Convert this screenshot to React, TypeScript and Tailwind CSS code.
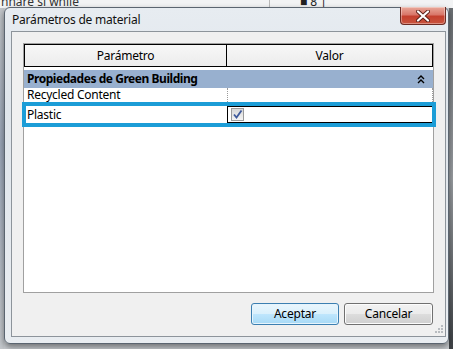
import React from "react";

const font = "font-['Segoe_UI','Noto_Sans','Open_Sans',sans-serif]";

function CloseButton() {
  return (
    <div className="absolute right-[2px] top-[-1px] flex h-[18px] w-[46px] items-center justify-center rounded-b-[4px] border border-t-0 border-[#6b2a22] bg-[linear-gradient(to_bottom,#e9a99a_0%,#d9776a_45%,#c4402e_55%,#c9553f_100%)] shadow-[inset_0_0_0_1px_rgba(255,255,255,0.35)]">
      <svg width="14" height="12" viewBox="0 0 14 12">
        <path d="M2 1.5 L12 10.5 M12 1.5 L2 10.5" stroke="#5a2018" strokeWidth="4" strokeLinecap="round" />
        <path d="M2 1.5 L12 10.5 M12 1.5 L2 10.5" stroke="#ffffff" strokeWidth="2.2" strokeLinecap="round" />
      </svg>
    </div>
  );
}

function CollapseIcon() {
  return (
    <svg width="8" height="9" viewBox="0 0 8 9">
      <path d="M1 4 L4 1 L7 4 M1 8 L4 5 L7 8" stroke="#000" strokeWidth="1.4" fill="none" />
    </svg>
  );
}

function Checkbox() {
  return (
    <div className="flex h-[13px] w-[13px] items-center justify-center border border-[#9a9a9a] bg-[linear-gradient(to_bottom,#d8d8d8,#f4f4f4)]">
      <svg width="11" height="11" viewBox="0 0 11 11">
        <path d="M2 5.5 L4.5 8.5 L9.5 1.5" stroke="#3f5a9c" strokeWidth="1.8" fill="none" />
      </svg>
    </div>
  );
}

function Grip() {
  const dots = [
    [6, 0],
    [3, 3],
    [6, 3],
    [0, 6],
    [3, 6],
    [6, 6],
  ];
  return (
    <svg width="8" height="8" viewBox="0 0 8 8">
      {dots.map(([x, y], i) => (
        <rect key={"g" + i} x={x} y={y} width="2" height="2" fill="#b8bcc0" />
      ))}
    </svg>
  );
}

export default function App() {
  return (
    <div className={`relative h-[349px] w-[453px] overflow-hidden bg-[#c9cdd1] text-black ${font}`}>
      {/* application behind the dialog */}
      <div className="flex h-[8px] items-end overflow-hidden bg-[#f2f3f4]">
        <span className="ml-[1px] text-[12px] leading-[12px] text-[#333]">nhare si while</span>
        <div className="ml-[190px] h-[8px] w-px bg-[#b8b8b8]" />
        <span className="ml-[30px] text-[12px] leading-[12px] text-[#222]">■ 8 |</span>
      </div>
      <div className="flex h-[341px] justify-between">
        <div className="w-[4px] bg-[linear-gradient(to_bottom,#c0c4c8,#9aa6b8_40%,#c4c8cc)]" />
        <div className="w-[4px] bg-[linear-gradient(to_bottom,#6a6e72,#9a9ea2_50%,#3e4246)]" />
      </div>

      {/* dialog window */}
      <div className="absolute left-[4px] top-[7px] h-[337px] w-[445px] rounded-[6px] border border-[#5b6570] bg-[linear-gradient(to_bottom,#e7ecf1,#dfe5eb_30%,#e9edf1)] shadow-[0_3px_6px_rgba(0,0,0,0.45)]">
        <CloseButton />
        <div className="flex h-[23px] items-center pl-[7px] text-[12px] tracking-[-0.2px] text-[#111]">
          Parámetros de material
        </div>
        <div className="ml-[6px] flex h-[306px] w-[435px] flex-col border border-[#8d949b] bg-[#f0f0f0] pl-[11px] pt-[11px]">
          {/* property grid */}
          <div className="flex h-[251px] w-[411px] flex-col border border-[#a0a0a0] bg-white text-[12px] tracking-[-0.25px]">
            <div className="flex h-[23px] border border-black bg-[linear-gradient(to_bottom,#f7f7f7,#ececec)]">
              <div className="flex w-[202px] items-center justify-center border-r border-black">Parámetro</div>
              <div className="flex flex-1 items-center justify-center">Valor</div>
            </div>
            <div className="h-[3px]" />
            <div className="flex h-[18px] items-center justify-between bg-[#98b0cf] pl-[3px] pr-[8px] font-bold">
              <span className="tracking-[-0.45px]">Propiedades de Green Building</span>
              <CollapseIcon />
            </div>
            <div className="flex h-[14px] items-center">
              <div className="w-[203px] pl-[3px] leading-[14px]">Recycled Content</div>
              <div className="h-full flex-1 border-x border-dotted border-[#9a9a9a]" />
            </div>
            <div className="relative flex h-[25px]">
              <div className="flex w-[203px] items-center pl-[3px]">Plastic</div>
              <div className="my-[4px] flex flex-1 items-center border border-black pl-[3px]">
                <Checkbox />
              </div>
              <div className="pointer-events-none absolute -left-[2px] top-0 h-[25px] w-[414px] border-[4px] border-[#1c9dd7]" />
            </div>
          </div>

          {/* buttons */}
          <div className="mt-[10px] flex items-start justify-end gap-[5px] pr-[12px] text-[12px] tracking-[-0.2px]">
            <button className="h-[22px] w-[88px] rounded-[3px] border border-[#3c7fb1] bg-[linear-gradient(to_bottom,#eaf6fd_0%,#d9f0fc_50%,#bee6fd_51%,#a7d9f5_100%)] shadow-[inset_0_0_0_1px_#e6f4fc]">
              Aceptar
            </button>
            <button className="h-[22px] w-[89px] rounded-[3px] border border-[#707070] bg-[linear-gradient(to_bottom,#f2f2f2_0%,#ebebeb_50%,#dddddd_51%,#cfcfcf_100%)] shadow-[inset_0_0_0_1px_#fcfcfc]">
              Cancelar
            </button>
          </div>
          <div className="mt-auto flex justify-end pb-[3px] pr-[2px]">
            <Grip />
          </div>
        </div>
      </div>
    </div>
  );
}
